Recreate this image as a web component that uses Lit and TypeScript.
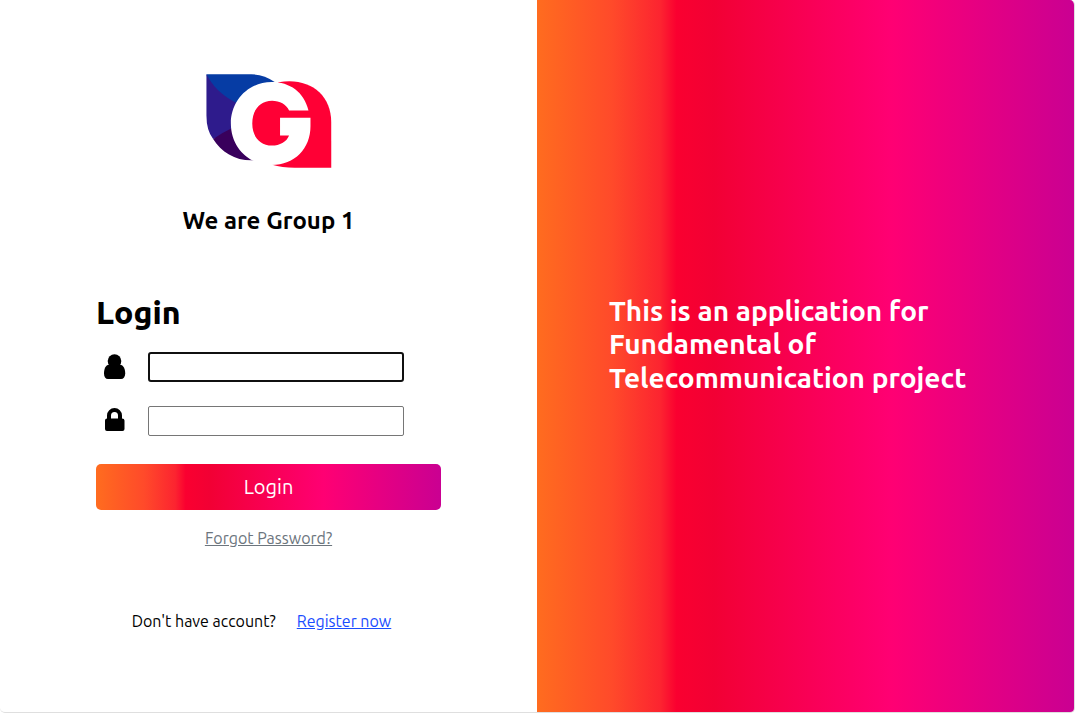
import { LitElement, html, css } from "lit";
import { customElement } from "lit/decorators.js";

@customElement("app-root")
export class AppRoot extends LitElement {
  static styles = css`
    :host {
      --brand: linear-gradient(to right, #ff6c1f 0%, #ff4a2a 14%, #fc2430 23%, #fa0030 26%, #f20034 33%, #ff0073 66%, #ca0092 100%);
      display: block;
      height: 100vh;
      font-family: Ubuntu, "Noto Sans", sans-serif;
      font-size: 16px;
      font-weight: 400;
      line-height: 24px;
      color: #000;
    }
    * { box-sizing: border-box; }
    .card {
      display: grid;
      grid-template-columns: 1fr 1fr;
      height: 100%;
      margin-right: 1px;
      background: #fff;
      border: solid #dfdfdf;
      border-width: 0 1px 1px 0;
      border-radius: 5px;
      overflow: hidden;
    }
    .panel {
      display: flex;
      flex-direction: column;
      padding: 74px 96px 0;
    }
    .brand { text-align: center; }
    .logo { display: block; width: 126px; height: 94px; margin: 0 auto; }
    .brand h2 { margin: 39px 0 0; font-size: 24px; line-height: 28px; font-weight: 600; }
    .title { margin: 58px 0 0; font-size: 32px; line-height: 38px; font-weight: 800; }
    .fields { display: grid; gap: 24px; margin-top: 21px; }
    .field { display: flex; align-items: center; gap: 14px; }
    .field label { width: 38px; display: flex; justify-content: center; }
    .icon { display: block; width: 22px; height: 26px; fill: #000; }
    .field input {
      flex: 0 1 256px;
      min-width: 0;
      height: 30px;
      padding: 1px 4px;
      font: inherit;
      border: 1px solid #767676;
      border-radius: 2px;
      background: #fff;
    }
    .field .active { border: 2px solid #101010; border-radius: 3px; }
    .field input:focus { outline: none; }
    .submit {
      width: 100%;
      height: 46px;
      margin-top: 28px;
      border: 0;
      border-radius: 5px;
      background: var(--brand);
      color: #fff;
      font: inherit;
      font-size: 20px;
      cursor: pointer;
    }
    .forgot { align-self: center; margin-top: 16px; color: #6c757d; }
    .signup { display: flex; justify-content: center; gap: 21px; margin: 59px 14px 0 0; white-space: nowrap; }
    .signup a { color: #1a4dff; }
    .hero {
      display: flex;
      align-items: center;
      padding: 0 72px 24px;
      background: var(--brand);
      color: #fff;
    }
    .hero h3 { margin: 0; font-size: 28px; line-height: 1.2; font-weight: 600; }
  `;

  render() {
    return html`
      <main class="card">
        <section class="panel">
          <div class="brand">
            <svg class="logo" viewBox="35 26 376 281" role="img" aria-label="Group 1 logo">
              <path fill="#063ca4" d="M36 27H170Q208 27 240 50L180 180L60 150Z" />
              <path fill="#2e1b8c" d="M36 27C54 62 80 90 130 115V190L56 220Q36 195 36 150Z" />
              <path fill="#39005c" d="M56 220Q85 201 120 184L200 284H175C125 286 80 260 56 220Z" />
              <path fill="#ff0035" d="M252 51C340 35 409 85 409 170V306H300Q262 306 232 297L160 200V120Z" />
              <path fill="#fff" d="M341 135C328 80 285 50 231 50C162 50 109 105 109 174C109 245 162 298 231 298C300 298 347 248 347 182V157H256V210H283C275 230 255 240 232 240C195 240 173 212 173 174C173 135 195 106 232 106C255 106 275 117 283 135Z" />
            </svg>
            <h2>We are Group 1</h2>
          </div>
          <h1 class="title">Login</h1>
          <form @submit=${(e: Event) => e.preventDefault()}>
            <div class="fields">
              <div class="field">
                <label for="user" aria-label="Username">
                  <svg class="icon" viewBox="0 0 22 26">
                    <circle cx="10.500" cy="7" r="6.800" />
                    <path d="M5 10.800H16C19.500 11 21.200 15 21.200 19.500C21.200 23 19.500 25 17 25H4C1.500 25 0 23 0 19.500C0 15 1.500 11 5 10.800Z" />
                  </svg>
                </label>
                <input class="active" id="user" type="text" autocomplete="username" />
              </div>
              <div class="field">
                <label for="pass" aria-label="Password">
                  <svg class="icon" viewBox="0 0 22 26">
                    <path fill-rule="evenodd" d="M3 10.500V7.500A7.500 7.500 0 0 1 18 7.500V10.500Q20.500 10.500 20.500 12.500V21Q20.500 23 18.500 23H3Q1 23 1 21V12.500Q1 10.500 3 10.500ZM7 10.500H14V7.500A3.500 3.500 0 0 0 7 7.500Z" />
                  </svg>
                </label>
                <input id="pass" type="password" autocomplete="current-password" />
              </div>
            </div>
            <button class="submit" type="submit">Login</button>
          </form>
          <a class="forgot" href="#forgot">Forgot Password?</a>
          <div class="signup">
            <span>Don't have account?</span>
            <a href="#register">Register now</a>
          </div>
        </section>
        <section class="hero">
          <h3>This is an application for Fundamental of Telecommunication project</h3>
        </section>
      </main>
    `;
  }
}
